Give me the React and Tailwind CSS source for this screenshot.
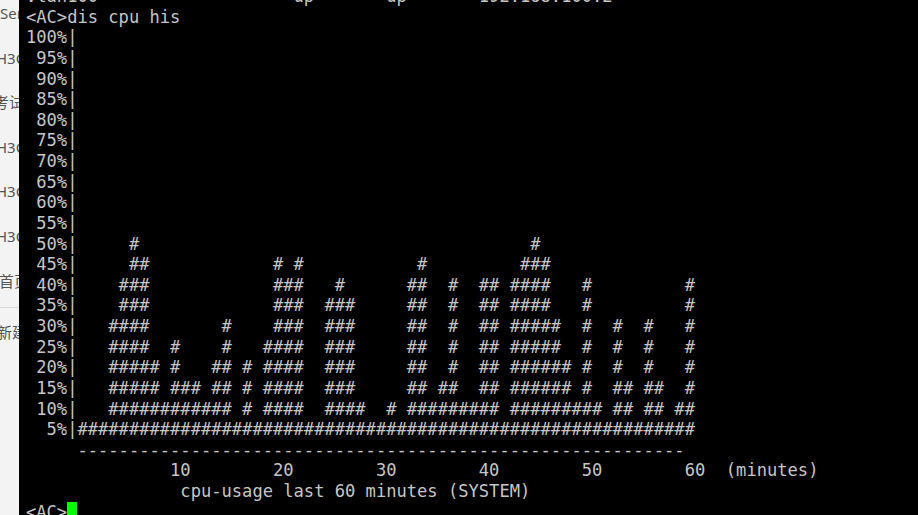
const range = (a, b) => Array.from({ length: b - a + 1 }, (_, i) => a + i)

// bar columns (0..59) that carry a '#' at each level
const levels = {
  50: [5, 44],
  45: [5, 6, 19, 21, 33, 43, 44, 45],
  40: [...range(4, 6), ...range(19, 21), 25, 32, 33, 36, 39, 40, ...range(42, 45), 49, 59],
  35: [...range(4, 6), ...range(19, 21), ...range(24, 26), 32, 33, 36, 39, 40, ...range(42, 45), 49, 59],
  30: [...range(3, 6), 14, ...range(19, 21), ...range(24, 26), 32, 33, 36, 39, 40, ...range(42, 46), 49, 52, 55, 59],
  25: [...range(3, 6), 9, 14, ...range(18, 21), ...range(24, 26), 32, 33, 36, 39, 40, ...range(42, 46), 49, 52, 55, 59],
  20: [...range(3, 7), 9, 13, 14, 16, ...range(18, 21), ...range(24, 26), 32, 33, 36, 39, 40, ...range(42, 47), 49, 52, 55, 59],
  15: [...range(3, 7), ...range(9, 11), 13, 14, 16, ...range(18, 21), ...range(24, 26), 32, 33, 35, 36, 39, 40, ...range(42, 47), 49, 52, 53, 55, 56, 59],
  10: [...range(3, 14), 16, ...range(18, 21), ...range(24, 27), 30, ...range(32, 40), ...range(42, 50), 52, 53, 55, 56, 58, 59],
  5: range(0, 59),
}

function bars(level) {
  const set = new Set(levels[level] || [])
  let s = ''
  for (let i = 0; i < 60; i++) s += set.has(i) ? '#' : ' '
  return s.replace(/\s+$/, '')
}

const percents = range(1, 20).map(n => 105 - n * 5)

const lines = [
  'Vlan100                   up       up       192.168.100.2    --',
  '<AC>dis cpu his',
  ...percents.map(p => `${String(p).padStart(3, ' ')}%|${bars(p)}`),
  '     ' + '-'.repeat(59),
  '              10        20        30        40        50        60  (minutes)',
  '               cpu-usage last 60 minutes (SYSTEM)',
]

const sideItems = [
  { text: 'Server', ml: 'ml-0' },
  { text: 'H3C', ml: 'ml-[-4px]' },
  { text: '考试', ml: 'ml-[-6px]' },
  { text: 'H3C', ml: 'ml-[-4px]' },
  { text: 'H3C', ml: 'ml-[-4px]' },
  { text: 'H3C', ml: 'ml-[-4px]' },
  { text: '首页', ml: 'ml-[-1px]' },
]

export default function App() {
  return (
    <div className="flex w-[918px] h-[515px] overflow-hidden bg-black">
      <div className="w-[19px] shrink-0 h-full overflow-hidden bg-[#f3f3f3] text-[#555] text-[15px] font-['Noto_Sans','Noto_Sans_CJK_SC',sans-serif]">
        <div className="flex flex-col mt-[-9px]">
          {sideItems.map((it, i) => (
            <div key={i} className="h-[44.6px] flex items-center whitespace-nowrap">
              <span className={it.ml}>{it.text}</span>
            </div>
          ))}
          <div className="mt-[4px] h-px bg-[#d8d8d8]" />
          <div className="h-[48px] flex items-center whitespace-nowrap">
            <span className="ml-[-3px]">新建</span>
          </div>
        </div>
      </div>

      <div className="flex-1 h-full overflow-hidden pl-[7px] text-[#c6c6c6] text-[17.1px] leading-[20.63px] font-['DejaVu_Sans_Mono',monospace]">
        <div className="mt-[-13.9px]">
          {lines.map((l, i) => (
            <div key={i} className="whitespace-pre h-[20.63px]">{l}</div>
          ))}
          <div className="whitespace-pre h-[20.63px] flex">
            <span>{'<AC>'}</span>
            <span className="inline-block w-[10.3px] h-[20.63px] bg-[#00ff00]" />
          </div>
        </div>
      </div>
    </div>
  )
}
